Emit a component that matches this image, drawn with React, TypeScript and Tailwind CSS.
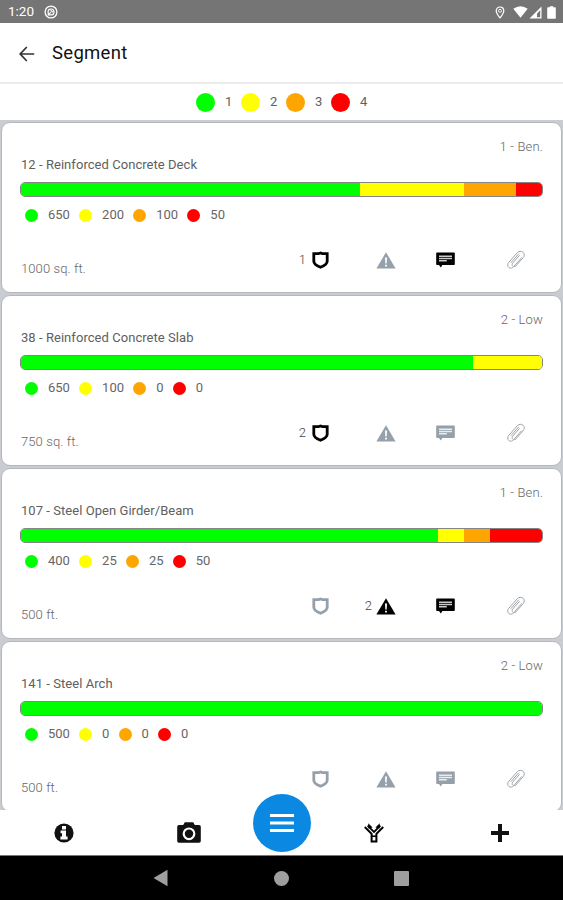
import React from 'react';
import clsx from 'clsx';

interface Segment {
    title: string;
    rating: string;
    amount: string;
    states: number[];
    shields?: number;
    warnings?: number;
    hasNotes?: boolean;
}

const COLORS = ['bg-[#00ff00]', 'bg-[#ffff00]', 'bg-[#ffa500]', 'bg-[#ff0000]'];

const SEGMENTS: Segment[] = [
    { title: '12 - Reinforced Concrete Deck', rating: '1 - Ben.', amount: '1000 sq. ft.', states: [650, 200, 100, 50], shields: 1, hasNotes: true },
    { title: '38 - Reinforced Concrete Slab', rating: '2 - Low', amount: '750 sq. ft.', states: [650, 100, 0, 0], shields: 2 },
    { title: '107 - Steel Open Girder/Beam', rating: '1 - Ben.', amount: '500 ft.', states: [400, 25, 25, 50], warnings: 2, hasNotes: true },
    { title: '141 - Steel Arch', rating: '2 - Low', amount: '500 ft.', states: [500, 0, 0, 0] },
];

const iconColor = (active?: boolean | number) => (active ? 'text-black' : 'text-[#95a0aa]');

function ShieldIcon() {
    return (
        <svg width="17" height="18" viewBox="0 0 17 18" fill="none">
            <path d="M1.8 2.7H6.4L8.5 1.9L10.6 2.7H15.2V10.2C15.2 12.8 12.8 14.6 8.5 16.2C4.2 14.6 1.8 12.8 1.8 10.2Z" stroke="currentColor" strokeWidth="2.8" />
        </svg>
    );
}

function WarningIcon() {
    return (
        <svg width="20" height="17" viewBox="0 0 20 17">
            <path d="M10 0.3L19.6 16.5H0.4Z" fill="currentColor" />
            <path d="M9 5.5H11L10.7 11.6H9.3ZM9.1 12.7H10.9V14.5H9.1Z" fill="#fff" />
        </svg>
    );
}

function NotesIcon() {
    return (
        <svg width="19" height="16" viewBox="0 0 19 16">
            <path d="M1 0.5H18Q18.8 0.5 18.8 1.3V12.2Q18.8 13 18 13H6.4L4.8 15.4L3 13H1Q0.2 13 0.2 12.2V1.3Q0.2 0.5 1 0.5Z" fill="currentColor" />
            <path d="M3 4.2H16M3 6.5H16M3 8.8H10.8" stroke="#fff" strokeWidth="1.5" opacity="0.8" />
        </svg>
    );
}

function ClipIcon() {
    return (
        <svg width="20" height="20" viewBox="0 0 20 20" fill="none">
            <path
                d="M15.4 7.8L7.8 16.6C6.6 18 4.6 18.8 3 17.6C1.2 16.2 1.4 14 2.7 12.4L11.4 2.6C12.8 1.1 15.4 0.8 17 2.2C18.7 3.7 18.6 6 17.3 7.5L10 15.8C9.1 16.8 7.7 16.9 6.8 16.1C5.9 15.3 5.9 14 6.8 13L13.3 5.6M5 12.5L12.6 4"
                stroke="#a0a5a9"
                strokeWidth="1"
                strokeLinecap="round"
            />
        </svg>
    );
}

function LocationIcon() {
    return (
        <svg width="10" height="13" viewBox="0 0 10 13" fill="none">
            <path d="M5 1C2.8 1 1.2 2.6 1.2 4.7C1.2 7.3 5 11.8 5 11.8C5 11.8 8.8 7.3 8.8 4.7C8.8 2.6 7.2 1 5 1Z" stroke="#fff" strokeWidth="1.2" />
            <circle cx="5" cy="4.8" r="1.5" stroke="#fff" strokeWidth="0.9" />
        </svg>
    );
}

function StatusBar() {
    return (
        <div className="flex h-[23px] shrink-0 items-center bg-[#757575] pl-2 pr-[7px] pt-px text-white">
            <span className="w-[36px] text-[13.5px] leading-none">1:20</span>
            <svg width="14" height="14" viewBox="0 0 14 14" fill="none">
                <circle cx="7" cy="7" r="5.9" stroke="#fff" strokeWidth="1.3" />
                <path d="M4 7.2A3 3 0 1 1 7.4 10M4.6 9.6L7 7.2M4.2 6.2V9.9H7.8M6.5 5.3L9 7.3" stroke="#fff" strokeWidth="1.1" />
            </svg>
            <div className="ml-auto flex items-center">
                <LocationIcon />
                <svg className="ml-[8px]" width="15" height="12" viewBox="0 0 15 12">
                    <path d="M0.3 2.8Q7.5 -2.4 14.7 2.8L7.5 11.8Z" fill="#fff" />
                </svg>
                <svg className="ml-px" width="13" height="13" viewBox="0 0 13 13">
                    <path d="M12.5 0.5V12.5H0.5Z" fill="#fff" />
                    <path d="M11.2 4.2V11.2H8V7.4Z" fill="#757575" />
                </svg>
                <svg className="ml-[5px]" width="9" height="13" viewBox="0 0 9 13">
                    <path d="M2.8 0.3H6.2V1.3H8Q8.8 1.3 8.8 2.1V12Q8.8 12.8 8 12.8H1Q0.2 12.8 0.2 12V2.1Q0.2 1.3 1 1.3H2.8Z" fill="#fff" />
                </svg>
            </div>
        </div>
    );
}

function SegmentCard({ segment }: { segment: Segment }) {
    const total = segment.states.reduce((sum, n) => sum + n, 0);

    return (
        <div className="flex h-[171px] shrink-0 flex-col rounded-[9px] border border-[#b4b8bc] bg-white px-[18px] pt-[15px]">
            <div className="text-right text-[13px] leading-[18px] font-light tracking-[0.15px] text-[#666]">{segment.rating}</div>
            <div className="pl-px text-[13px] leading-[18px] tracking-[0.05px] text-[#606060]">{segment.title}</div>
            <div className="mt-[8px] flex h-[15px] shrink-0 overflow-hidden rounded-[5px] border border-[#858585]">
                {segment.states.map((n, i) => (
                    <div key={i} className={COLORS[i]} style={{ width: `${(n / total) * 100}%` }} />
                ))}
            </div>
            <div className="mt-[9px] flex h-[18px] items-center pl-[5px] text-[13px] text-[#666]">
                {segment.states.map((n, i) => (
                    <div key={i} className="mr-[9.2px] flex items-center">
                        <span className={clsx('size-[13px] rounded-full', COLORS[i])} />
                        <span className="ml-[10px]">{n}</span>
                    </div>
                ))}
            </div>
            <div className="mt-[25px] flex h-[32px] text-[13px] text-[#666]">
                <div className="w-[260px] self-end pb-[3px] pl-px leading-[18px] font-light tracking-[0.1px]">{segment.amount}</div>
                <div className={clsx('flex h-[22px] w-[49px] items-center justify-end gap-[6px]', iconColor(segment.shields))}>
                    {segment.shields && <span className="font-light text-[#444]">{segment.shields}</span>}
                    <ShieldIcon />
                </div>
                <div className={clsx('flex h-[22px] w-[67px] items-center justify-end gap-[4px]', iconColor(segment.warnings))}>
                    {segment.warnings && <span className="font-light text-[#444]">{segment.warnings}</span>}
                    <WarningIcon />
                </div>
                <div className={clsx('flex h-[22px] w-[59px] items-center justify-end', iconColor(segment.hasNotes))}>
                    <NotesIcon />
                </div>
                <div className="flex h-[22px] w-[71px] items-center justify-end">
                    <ClipIcon />
                </div>
            </div>
        </div>
    );
}

function BottomBar() {
    return (
        <div className="relative flex h-[45px] shrink-0 items-center bg-white">
            <div className="flex w-[127px] justify-center">
                <svg width="20" height="20" viewBox="0 0 20 20">
                    <circle cx="10" cy="10" r="9.6" fill="#111" />
                    <path d="M8 3H12V6.4H8ZM6.6 7.6H12V13.6H13.6V16.4H6.4V13.6H8V10.2H6.6Z" fill="#fff" />
                </svg>
            </div>
            <div className="flex w-[124px] justify-center">
                <svg width="24" height="22" viewBox="0 0 24 22">
                    <path d="M2 3H6.2L7.8 0.2H16.2L17.8 3H22Q23.8 3 23.8 4.8V18.9Q23.8 20.7 22 20.7H2Q0.2 20.7 0.2 18.9V4.8Q0.2 3 2 3Z" fill="#111" />
                    <circle cx="12" cy="11.8" r="5.3" fill="none" stroke="#fff" strokeWidth="2.2" />
                </svg>
            </div>
            <div className="ml-[113px] flex">
                <svg width="20" height="20" viewBox="0 0 20 20" fill="none">
                    <path d="M0.8 4L7.6 10.9V18.6H12.4V10.9L19.2 4" stroke="#000" strokeWidth="2" />
                    <path d="M3.6 2.6L10 9L16.4 2.6" stroke="#000" strokeWidth="1.8" />
                    <path d="M4.2 0.2L8.6 4.4L4.4 5.4ZM15.8 0.2L11.4 4.4L15.6 5.4Z" fill="#000" />
                    <path d="M7.6 13.2H12.4" stroke="#000" strokeWidth="1.6" />
                </svg>
            </div>
            <div className="ml-[107px] flex">
                <svg width="18" height="18" viewBox="0 0 18 18">
                    <path d="M9 1.4V16.6M1.4 9H16.6" stroke="#111" strokeWidth="4" strokeLinecap="square" />
                </svg>
            </div>
            {/* floating menu button sits over the list edge */}
            <button className="absolute left-[253px] -top-[16px] flex size-[58px] items-center justify-center rounded-full bg-[#0a88e2]">
                <svg width="24" height="18" viewBox="0 0 24 18">
                    <path d="M0 1.5H24M0 9H24M0 16.5H24" stroke="#fff" strokeWidth="3" />
                </svg>
            </button>
        </div>
    );
}

export default function App() {
    return (
        <div className="flex h-[900px] w-[563px] flex-col overflow-hidden bg-white font-['Roboto',sans-serif]">
            <StatusBar />
            <header className="flex h-[61px] shrink-0 items-center border-b-2 border-[#ececec] pl-[19px] pt-[2px]">
                <svg width="16" height="16" viewBox="0 0 16 16" fill="none">
                    <path d="M7.8 1L1.2 8L7.8 15M1.2 8H15.2" stroke="#333" strokeWidth="1.7" />
                </svg>
                <h1 className="ml-[17px] text-[18.5px] tracking-[0.3px] text-[#111]">Segment</h1>
            </header>
            <div className="flex h-[36px] shrink-0 items-center pl-[196px] text-[13px] text-[#606060]">
                {COLORS.map((color, i) => (
                    <div key={color} className="flex w-[45px] items-center">
                        <span className={clsx('size-[19px] rounded-full', color)} />
                        <span className="ml-[10px]">{i + 1}</span>
                    </div>
                ))}
            </div>
            <main className="flex h-[690px] shrink-0 flex-col gap-[2px] overflow-hidden bg-[#c9cdd1] px-px pt-[2px]">
                {SEGMENTS.map((segment) => (
                    <SegmentCard key={segment.title} segment={segment} />
                ))}
            </main>
            <BottomBar />
            <nav className="flex h-[45px] shrink-0 items-center border-t border-[#777] bg-black pl-[153px]">
                <svg width="15" height="18" viewBox="0 0 15 18">
                    <path d="M14.5 0.8V17.2L0.5 9Z" fill="#9e9e9e" />
                </svg>
                <span className="ml-[106px] size-[15px] rounded-full bg-[#9e9e9e]" />
                <span className="ml-[105px] size-[15px] rounded-[1px] bg-[#9e9e9e]" />
            </nav>
        </div>
    );
}
